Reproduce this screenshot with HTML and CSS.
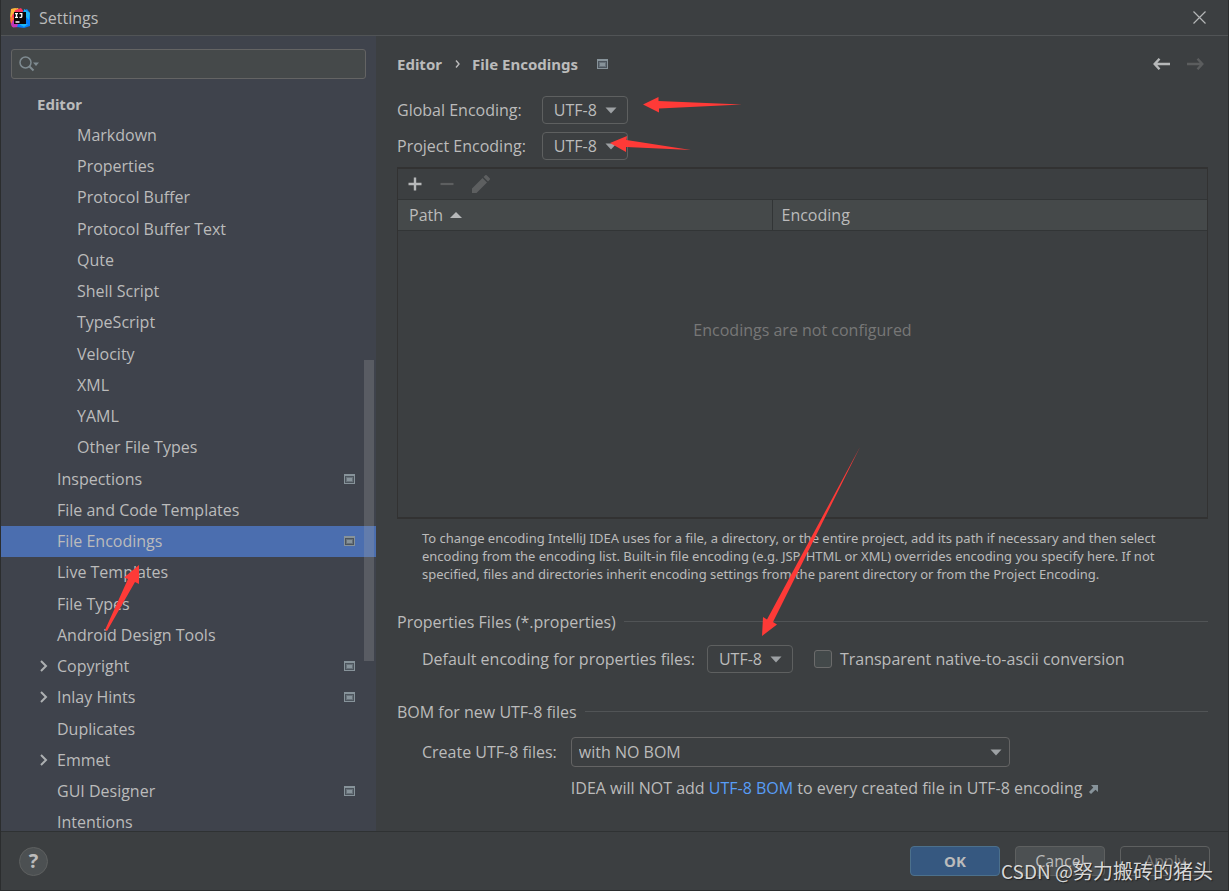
FILE: index.html
```html
<!DOCTYPE html>
<html lang="en">
<head>
<meta charset="utf-8">
<title>Settings</title>
<link rel="stylesheet" href="styles.css">
</head>
<body>
<svg class="defs" width="0" height="0" aria-hidden="true">
  <symbol id="project" viewBox="0 0 11 10"><path fill="#87939a" d="M0 0h11v10H0z"/><path fill="#4c545c" d="M1 2h9v7H1z"/><path fill="#68727a" d="M2 3h7v5H2z"/><path fill="#87939a" d="M3 4h5v3H3z"/></symbol>
  <symbol id="down" viewBox="0 0 12 7"><path fill="#9da1a4" d="M.5.5h11L6 6.500z"/></symbol>
  <symbol id="chevron" viewBox="0 0 8 12"><path fill="none" stroke="#adb0b2" stroke-width="2" d="M1 1l5 5-5 5"/></symbol>
</svg>
<div class="window">
  <header class="titlebar">
    <svg class="logo" viewBox="0 0 20 20" aria-hidden="true">
      <path fill="#fdb53c" d="M1 1l7-1 3 5-5 7-6-3z"/>
      <path fill="#fe315d" d="M3 3l8-3 3 4-8 14-4 1-2-8 2-2z"/>
      <path fill="#fdb53c" d="M1 1l5-1-2 5-3 3z"/>
      <path fill="#ff7a2f" d="M0 8l4 2-3 6z"/>
      <path fill="#c137b8" d="M3 12l4 2 2 5-6 .5-2-3z"/>
      <path fill="#087cfa" d="M13 3l4-2 3 4v13l-6 2-7-1z"/>
      <path fill="#1db5f5" d="M14 1l6 4-1 7-5-5zM9 16h9l-4 3z"/>
      <path fill="#0b0507" d="M4 4h12v12H4z"/>
      <path fill="none" stroke="#fff" stroke-width="1.300" d="M5 5.700h3M6.500 5.700v3.600M5 9.300h3M9.500 5.700h2.300v2.800q0 .9-1 .9h-1.300M5.500 14h4"/>
    </svg>
    <h1>Settings</h1>
    <button class="icon-btn close" aria-label="Close"><svg width="13" height="13" viewBox="0 0 13 13"><path stroke="#b4b6b7" stroke-width="1.200" d="M.5.5l12 12M12.500.5l-12 12"/></svg></button>
  </header>

  <aside class="sidebar">
    <div class="search">
      <svg width="21" height="16" viewBox="0 0 21 16" aria-hidden="true"><circle cx="6.500" cy="6.500" r="5.500" fill="none" stroke="#7f8b91" stroke-width="1.500"/><path stroke="#7f8b91" stroke-width="2" d="M10.500 10.500l4 4"/><path fill="#7f8b91" d="M14 6.500h6L17 10z"/></svg>
      <input type="text" aria-label="Search settings">
    </div>
    <ul class="tree">
      <li class="root">Editor</li>
      <li class="leaf">Markdown</li>
      <li class="leaf">Properties</li>
      <li class="leaf">Protocol Buffer</li>
      <li class="leaf">Protocol Buffer Text</li>
      <li class="leaf">Qute</li>
      <li class="leaf">Shell Script</li>
      <li class="leaf">TypeScript</li>
      <li class="leaf">Velocity</li>
      <li class="leaf">XML</li>
      <li class="leaf">YAML</li>
      <li class="leaf">Other File Types</li>
      <li>Inspections<svg class="proj"><use href="#project"/></svg></li>
      <li>File and Code Templates</li>
      <li class="selected">File Encodings<svg class="proj"><use href="#project"/></svg></li>
      <li>Live Templates</li>
      <li>File Types</li>
      <li>Android Design Tools</li>
      <li class="branch"><svg class="chev"><use href="#chevron"/></svg>Copyright<svg class="proj"><use href="#project"/></svg></li>
      <li class="branch"><svg class="chev"><use href="#chevron"/></svg>Inlay Hints<svg class="proj"><use href="#project"/></svg></li>
      <li>Duplicates</li>
      <li class="branch"><svg class="chev"><use href="#chevron"/></svg>Emmet</li>
      <li>GUI Designer<svg class="proj"><use href="#project"/></svg></li>
      <li>Intentions</li>
    </ul>
    <div class="scroll-thumb"></div>
  </aside>

  <main class="content">
    <div class="crumbs">
      <h2>Editor</h2>
      <svg width="6" height="8" viewBox="0 0 6 8" aria-hidden="true"><path fill="none" stroke="#bbb" stroke-width="1.400" d="M2 .5L5 4 2 7.500"/></svg>
      <h2>File Encodings</h2>
      <svg class="proj"><use href="#project"/></svg>
      <nav>
        <button class="icon-btn" aria-label="Back"><svg width="17" height="12" viewBox="0 0 17 12"><path fill="none" stroke="#b6b8b9" stroke-width="2.400" d="M6.500.8L1.700 6l4.800 5.200M1.500 6H17"/></svg></button>
        <button class="icon-btn" aria-label="Forward" disabled><svg width="17" height="12" viewBox="0 0 17 12"><path fill="none" stroke="#5b5d5e" stroke-width="2.400" d="M10.500.8L15.300 6l-4.800 5.200M15.500 6H0"/></svg></button>
      </nav>
    </div>

    <div class="encodings">
      <label for="global">Global Encoding:</label>
      <div class="combo"><select id="global"><option>UTF-8</option></select><svg><use href="#down"/></svg></div>
      <label for="project-enc">Project Encoding:</label>
      <div class="combo"><select id="project-enc"><option>UTF-8</option></select><svg><use href="#down"/></svg></div>
    </div>

    <section class="panel">
      <div class="toolbar">
        <button class="icon-btn" aria-label="Add"><svg width="14" height="14" viewBox="0 0 14 14"><path stroke="#b6b8b9" stroke-width="2.400" d="M7 .5v13M.5 7h13"/></svg></button>
        <button class="icon-btn" aria-label="Remove" disabled><svg width="14" height="14" viewBox="0 0 14 14"><path stroke="#5d5f60" stroke-width="2.200" d="M.5 7h13"/></svg></button>
        <button class="icon-btn" aria-label="Edit" disabled><svg width="18" height="18" viewBox="0 0 18 18"><path fill="#5d5f60" d="M0 18v-4.500L10.500 3 15 7.500 4.500 18zM11.500 2l1.700-1.700q.8-.6 1.500 0l3 3q.6.7 0 1.500L16 6.500z"/></svg></button>
      </div>
      <table>
        <thead><tr><th class="path">Path <svg width="12" height="6" viewBox="0 0 12 6" aria-hidden="true"><path fill="#b6b8b9" d="M6 0l6 6H0z"/></svg></th><th>Encoding</th></tr></thead>
        <tbody><tr><td colspan="2">Encodings are not configured</td></tr></tbody>
      </table>
    </section>

    <p class="note">To change encoding IntelliJ IDEA uses for a file, a directory, or the entire project, add its path if necessary and then select<br>encoding from the encoding list. Built-in file encoding (e.g. JSP, HTML or XML) overrides encoding you specify here. If not<br>specified, files and directories inherit encoding settings from the parent directory or from the Project Encoding.</p>

    <h3>Properties Files (*.properties)</h3>
    <div class="row props">
      <label for="default-enc">Default encoding for properties files:</label>
      <div class="combo"><select id="default-enc"><option>UTF-8</option></select><svg><use href="#down"/></svg></div>
      <input type="checkbox" id="ascii">
      <label for="ascii">Transparent native-to-ascii conversion</label>
    </div>

    <h3>BOM for new UTF-8 files</h3>
    <div class="row bom">
      <label for="bom">Create UTF-8 files:</label>
      <div class="combo wide"><select id="bom"><option>with NO BOM</option></select><svg><use href="#down"/></svg></div>
      <p class="hint">IDEA will NOT add <a href="#bom">UTF-8 BOM</a> to every created file in UTF-8 encoding <svg width="9" height="9" viewBox="0 0 9 9" aria-hidden="true"><path fill="#87939a" d="M2 0h7v7L6.500 4.800 2 9 0 7l4.300-4.500z"/></svg></p>
    </div>
  </main>

  <footer class="footer">
    <button class="help" aria-label="Help">?</button>
    <button class="btn primary">OK</button>
    <button class="btn">Cancel</button>
    <button class="btn" disabled>Apply</button>
  </footer>
  <div class="watermark"><span>CSDN @</span>努力搬砖的猪头</div>
  <svg class="arrows" width="900" height="660" viewBox="0 0 900 660" aria-hidden="true">
    <path d="M643 104.500L658.500 97v4L742 104.500 659 108.500v4z"/>
    <path d="M610 143l17-7-.500 4L691 150l-65-3v5z"/>
    <path d="M139 565v19l-4-2L107 631l-2-1 23-51-4-1.500z"/>
    <path d="M762 636l1-19 4 2.500L860 447 773 622l4 2.500z"/>
  </svg>
</div>
</body>
</html>
```

FILE: styles.css
```css
* { box-sizing: border-box; margin: 0; padding: 0; }

body {
  background: #3c3f41;
  color: #bbbbbb;
  font: 16px/20px "Open Sans", "Noto Sans", sans-serif;
}

h1, h2, h3 { font-size: inherit; font-weight: 400; }
button, input, select { font: inherit; color: inherit; }
svg { flex: none; }

.defs { position: absolute; }

.window {
  position: relative;
  display: grid;
  grid-template: auto 1fr auto / 375px 1fr;
  height: 100vh;
  border: 1px solid #2b2d2e;
  border-top: 0;
}

.titlebar {
  grid-column: 1 / -1;
  display: flex;
  align-items: center;
  gap: 9px;
  height: 36px;
  padding: 0 22px 0 9px;
  border-bottom: 1px solid #515456;
}

.logo { width: 20px; height: 20px; }

.icon-btn {
  display: flex;
  background: none;
  border: 0;
}

.close { margin-left: auto; }

.sidebar {
  position: relative;
  padding-top: 13px;
  overflow: hidden;
  background: #3f434c;
}

.search {
  display: flex;
  align-items: center;
  gap: 4px;
  height: 30px;
  margin: 0 10px;
  padding: 0 7px;
  background: #45494a;
  border: 1px solid #646464;
  border-radius: 3px;
}

.search input {
  flex: 1;
  min-width: 0;
  background: none;
  border: 0;
  outline: 0;
}

.tree { margin-top: 10px; list-style: none; }

.tree li {
  display: flex;
  align-items: center;
  height: 31px;
  padding: 0 21px 2px 56px;
}

.tree li:nth-child(4n) { height: 32px; }
.tree .root { padding-left: 36px; font: 700 15px/20px "Noto Sans", sans-serif; }
.tree .leaf { padding-left: 76px; }
.tree .branch { padding-left: 39px; }
.tree .selected { background: #4b6eaf; }

.proj { width: 11px; height: 10px; }
.tree .proj { margin-left: auto; }
.chev { width: 8px; height: 12px; margin-right: 9px; }

.scroll-thumb {
  position: absolute;
  top: 324px;
  right: 2px;
  width: 10px;
  height: 301px;
  background: rgba(166, 166, 166, 0.26);
}

.content {
  min-width: 0;
  padding: 18px 20px 0 21px;
  overflow: hidden;
}

.crumbs {
  display: flex;
  align-items: center;
  height: 20px;
  gap: 12px;
}

.crumbs h2 { font: 700 15px/20px "Noto Sans", sans-serif; }
.crumbs .proj { margin-left: 7px; }

.crumbs nav {
  display: flex;
  gap: 17px;
  margin-left: auto;
  padding-right: 4px;
}

.encodings {
  display: grid;
  grid-template-columns: auto auto;
  justify-content: start;
  align-items: center;
  gap: 8px 16px;
  margin-top: 22px;
}

.combo { position: relative; width: 86px; }

.combo select {
  display: block;
  width: 100%;
  height: 28px;
  padding: 0 11px;
  appearance: none;
  background: transparent;
  border: 1px solid #5e6060;
  border-radius: 4px;
}

.combo svg {
  position: absolute;
  top: 50%;
  right: 11px;
  width: 12px;
  height: 7px;
  margin-top: -3px;
  pointer-events: none;
}

.panel {
  margin-top: 7px;
  border: 1px solid #323232;
  border-width: 2px 1px;
}

.toolbar {
  display: flex;
  align-items: center;
  gap: 18px;
  height: 30px;
  padding: 0 10px;
}

table { width: 100%; border-collapse: collapse; }

th {
  height: 31px;
  padding: 0 9px;
  background: #45494a;
  border: 1px solid #323536;
  border-width: 1px 0;
  font-weight: 400;
  text-align: left;
}

th.path {
  width: 374px;
  padding-left: 11px;
  border-right-width: 1px;
}

th svg { margin: 0 0 3px 3px; }

td {
  height: 286px;
  padding: 0 0 88px;
  color: #777777;
  text-align: center;
}

.note {
  margin: 10px 0 0 25px;
  font: 13px/18px "Noto Sans", sans-serif;
  white-space: nowrap;
}

h3 {
  display: flex;
  align-items: center;
  gap: 8px;
  margin-top: 29px;
}

h3::after {
  content: "";
  flex: 1;
  height: 1px;
  background: #515456;
}

.row { padding-left: 25px; }

.props {
  display: flex;
  align-items: center;
  margin-top: 13px;
}

.props .combo { margin-left: 12px; }

.props input {
  width: 18px;
  height: 18px;
  margin: 0 8px 0 21px;
  appearance: none;
  background: #43494a;
  border: 1px solid #6b6b6b;
  border-radius: 3px;
}

.bom {
  display: grid;
  grid-template-columns: auto 439px;
  justify-content: start;
  align-items: center;
  gap: 11px 14px;
  margin-top: 15px;
}

.combo.wide { width: 439px; }
.combo.wide select { height: 30px; padding: 0 7px; border-color: #646464; }
.combo.wide svg { right: 8px; }

.hint { grid-column: 2; white-space: nowrap; }
.hint svg { margin-left: 2px; }
.hint a { color: #589df6; text-decoration: none; }

.footer {
  grid-column: 1 / -1;
  display: flex;
  align-items: center;
  gap: 15px;
  height: 59px;
  padding: 0 18px;
  border-top: 1px solid #2f3233;
}

.help {
  width: 29px;
  height: 29px;
  margin-right: auto;
  background: #4c5052;
  border: 1px solid #5e6060;
  border-radius: 50%;
  font-size: 20px;
  font-weight: 700;
}

.btn {
  width: 90px;
  height: 30px;
  background: #4c5052;
  border: 1px solid #5e6060;
  border-radius: 4px;
}

.btn:disabled { background: transparent; color: #777777; }

.primary {
  background: #365880;
  border-color: #4c708c;
  font: 700 15px/20px "Noto Sans", sans-serif;
}

.watermark {
  position: absolute;
  right: 15px;
  bottom: 4px;
  color: #d8d8d8;
  font: 20px/30px "Noto Sans CJK SC", sans-serif;
  text-shadow: 1px 1px 1px #222222;
  pointer-events: none;
}

.watermark span { font-size: 19px; }

.arrows {
  position: absolute;
  top: 0;
  left: -1px;
  fill: #fe3a37;
  pointer-events: none;
}
```
